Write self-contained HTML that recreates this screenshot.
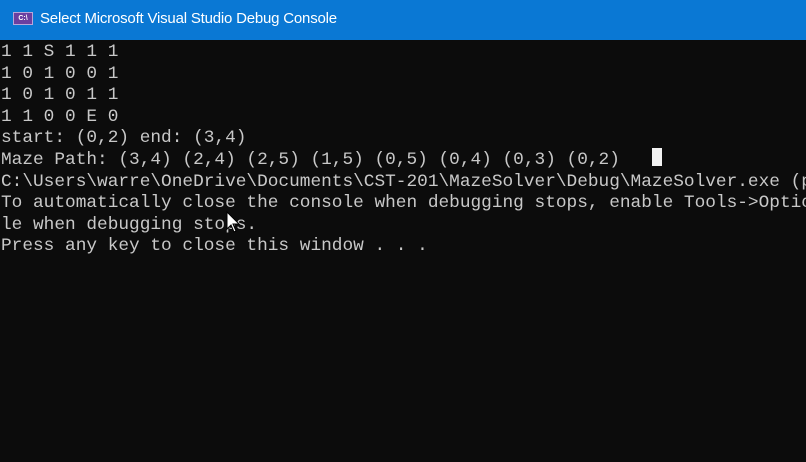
<!DOCTYPE html>
<html><head><style>
html,body{margin:0;padding:0;width:806px;height:462px;overflow:hidden;background:#0c0c0c;}
.tb{position:absolute;left:0;top:0;width:806px;height:40px;background:#0a78d4;}
.ic{position:absolute;left:13px;top:12px;width:20px;height:13px;background:#6b3fa0;border:1px solid #b9a6d9;box-sizing:border-box;color:#fff;font:bold 7px "Liberation Sans",sans-serif;text-align:center;line-height:11px;}
.tt{position:absolute;left:40px;top:10px;color:#fff;font:15px "Liberation Sans",sans-serif;letter-spacing:-0.2px;}
pre{position:absolute;left:1px;top:42px;margin:0;color:#c8c8c8;font:17.8px/21.6px "Liberation Mono",monospace;white-space:pre;}
.cur{position:absolute;left:652px;top:148px;width:10px;height:18px;background:#f2f2f2;}
svg{position:absolute;left:226px;top:211px;}
</style></head><body>
<div class="tb"><div class="ic">C:\</div><div class="tt">Select Microsoft Visual Studio Debug Console</div></div>
<pre>1 1 S 1 1 1
1 0 1 0 0 1
1 0 1 0 1 1
1 1 0 0 E 0
start: (0,2) end: (3,4)
Maze Path: (3,4) (2,4) (2,5) (1,5) (0,5) (0,4) (0,3) (0,2)
C:\Users\warre\OneDrive\Documents\CST-201\MazeSolver\Debug\MazeSolver.exe (p
To automatically close the console when debugging stops, enable Tools-&gt;Optio
le when debugging stops.
Press any key to close this window . . .</pre>
<div class="cur"></div>
<svg width="16" height="24" viewBox="0 0 16 24"><path d="M1 1 L1 18 L5 14 L8 21 L10 20 L7 13 L13 13 Z" fill="#fff" stroke="#000" stroke-width="1"/></svg>
</body></html>
